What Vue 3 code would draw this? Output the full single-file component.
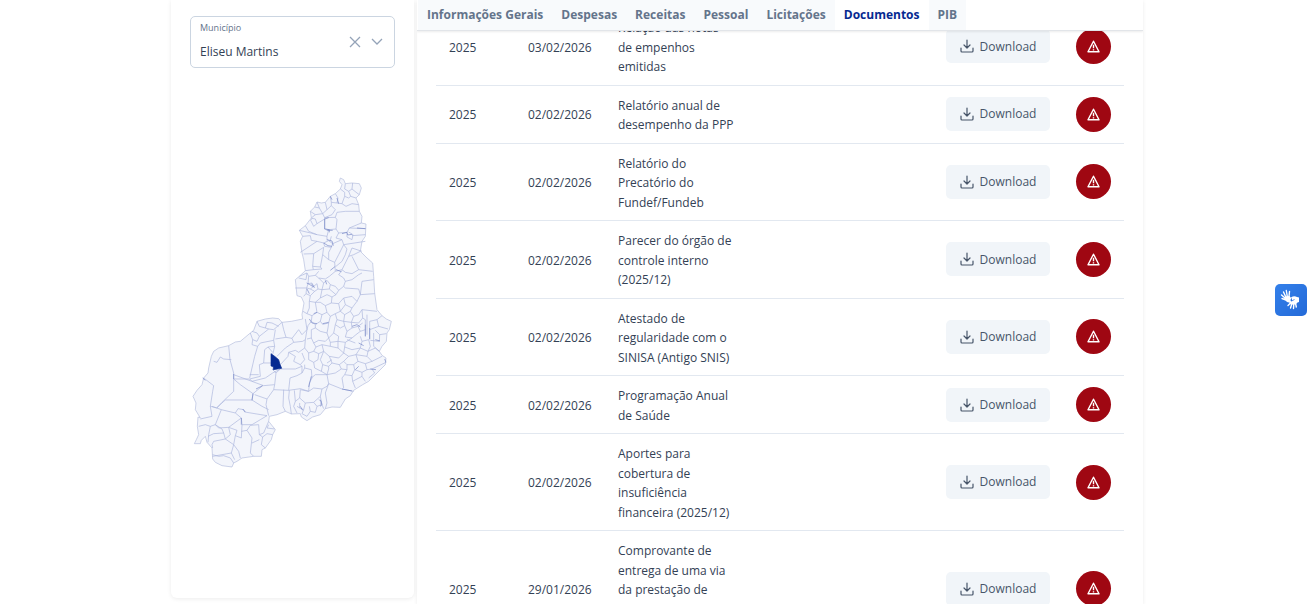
<script setup>
import { ref } from 'vue'

const municipio = ref('Eliseu Martins')
const municipios = ['Eliseu Martins', 'Teresina', 'Parnaíba', 'Picos']

const tabs = ['Informações Gerais', 'Despesas', 'Receitas', 'Pessoal', 'Licitações', 'Documentos', 'PIB']
const activeTab = ref('Documentos')

const documentos = [
  { ano: 2025, data: '03/02/2026', nome: 'Relação das notas de\u00a0empenhos emitidas' },
  { ano: 2025, data: '02/02/2026', nome: 'Relatório anual de desempenho da PPP' },
  { ano: 2025, data: '02/02/2026', nome: 'Relatório do Precatório do Fundef/Fundeb' },
  { ano: 2025, data: '02/02/2026', nome: 'Parecer do órgão de controle interno (2025/12)' },
  { ano: 2025, data: '02/02/2026', nome: 'Atestado de regularidade com o SINISA (Antigo SNIS)' },
  { ano: 2025, data: '02/02/2026', nome: 'Programação Anual de Saúde' },
  { ano: 2025, data: '02/02/2026', nome: 'Aportes para cobertura de insuficiência financeira (2025/12)' },
  { ano: 2025, data: '29/01/2026', nome: 'Comprovante de entrega de uma via da prestação de contas ao governo municipal' }
]

// contorno do estado
const contorno = 'M350 15L356 -20 348 -38 335 -42 330 -90 342 -100 360 -117 355 -150 350 -170 345 -205 352 -220 342 -238 360 -252 378 -275 375 -295 388 -308 395 -323 408 -320 420 -322 435 -340 450 -348 465 -362 470 -375 462 -385 465 -395 475 -390 480 -378 500 -380 522 -378 528 -365 522 -345 512 -335 520 -315 522 -295 530 -280 528 -260 542 -257 540 -220 530 -205 525 -175 545 -155 562 -140 565 -100 568 -50 575 0 590 18 603 28 618 35 612 60 605 70 603 95 590 110 582 125 590 137 602 145 600 165 575 190 550 215 532 225 505 242 495 258 480 268 465 293 440 292 420 297 405 315 382 322 365 333 348 322 345 312 318 313 300 305 275 315 252 320 250 335 270 360 262 375 258 390 240 415 230 420 228 440 205 440 170 445 155 455 145 460 140 472 125 470 110 468 90 458 82 448 80 415 65 398 60 380 48 392 45 402 27 402 33 390 40 375 36 350 38 322 45 325 30 300 32 280 23 260 35 242 50 225 55 205 68 190 70 175 78 140 85 125 100 115 130 108 150 97 165 95 195 70 205 62 215 35 240 28 262 25 280 27 290 38 318 35 352 28Z'

// divisas municipais, de norte a sul
const divisasNorte = [
  'M480 -378L478 -362 490 -355 500 -362 502 -380M500 -362L515 -350 522 -345M490 -355L496 -340 512 -335M465 -362L478 -352 478 -340 490 -335 496 -340M450 -348L458 -335 455 -320 470 -318 478 -340M435 -340L438 -322 455 -320M470 -318L482 -310 500 -318 520 -315M420 -322L425 -300 438 -312 438 -322M395 -323L402 -305 412 -288 425 -300M388 -308L402 -305M378 -275L390 -285 412 -288 418 -276 440 -285 450 -300 438 -312',
  'M375 -295L390 -285M376 -268L385 -250 395 -258 390 -272 380 -274 376 -268M395 -258L418 -272M360 -252L370 -235 395 -225 425 -220 430 -240 418 -242 418 -276 450 -277 455 -292 480 -295 522 -295M450 -277L455 -270 452 -242 430 -240M452 -242L460 -230 485 -232 492 -245 528 -260M342 -238L376 -230 395 -225M352 -220L375 -222M375 -222L378 -208 395 -205 415 -200M460 -230L452 -215 470 -210 475 -195 540 -205M485 -232L485 -218 500 -210 503 -225 490 -233M492 -245L542 -243M500 -222L540 -225',
  'M415 -200L418 -190 438 -187 442 -198 430 -207 415 -200M425 -220L425 -208M438 -220L434 -205M442 -198L470 -210M345 -172L365 -185 395 -205M355 -167L385 -168 415 -187M385 -168L382 -130 405 -128 412 -165 415 -187M412 -165L430 -150 430 -172 438 -187M430 -150L448 -142 460 -165 475 -195M448 -142L450 -115 470 -120 490 -160 500 -185 530 -175M475 -195L485 -182 480 -165 470 -145 452 -130M490 -160L505 -165 525 -175M500 -160L510 -140 520 -120 500 -108 480 -112 470 -120M520 -120L562 -115M382 -130L384 -120 410 -122 405 -128M360 -117L384 -120',
  'M342 -100L365 -110 370 -100 390 -103 400 -115M365 -110L362 -90 340 -95M390 -103L400 -95 420 -92 432 -100 450 -115M470 -118L460 -105 475 -95 480 -85 500 -90 520 -105 530 -110M480 -85L475 -70 480 -65 520 -62 525 -45 568 -48M530 -85L525 -45M530 -85L565 -90M370 -100L368 -78 380 -80 385 -70 375 -62 364 -65 368 -78M385 -70L395 -78 398 -62 388 -55 375 -62M398 -62L410 -60 415 -80 400 -95M415 -80L425 -88 435 -75 432 -62 410 -60M435 -75L450 -70 460 -58 475 -70M460 -58L452 -45 432 -62M330 -65L364 -65M364 -65L362 -48 375 -42 388 -55M362 -48L355 -40M375 -42L372 -25 390 -22 405 -35 410 -60M405 -35L425 -45 440 -38 452 -45M440 -38L438 -20 420 -12 405 -22 390 -22M438 -20L460 -18 475 -35 500 -40 515 -25 525 -45M475 -35L480 -15 500 -5 515 -25M460 -18L465 5 480 -15'
]
const divisasCentro = [
  'M353 5L365 12 372 -5 372 -25M365 12L380 18 395 8 390 -22M380 18L378 35 390 45 405 35 410 15 395 8M410 15L425 8 420 -12M425 8L435 20 430 40 412 44 405 35M435 20L450 12 465 5 478 15 495 5 500 -5M450 12L455 30 475 35 478 15M455 30L450 45 465 55 478 48 475 35M495 5L505 20 498 38 475 35M505 20L520 15 530 0 575 5M530 0L532 25 520 40 498 38M532 25L540 30 540 80M545 15L545 75M553 35L553 90M532 40L518 50 500 55 498 38M518 50L525 65 540 60M500 55L485 65 478 48M485 65L480 82 500 85 512 75 525 65M553 35L575 30 590 18M575 30L580 50 608 58M553 60L580 50M570 62L583 75 582 95 555 92M583 75L603 72M565 70L565 110 582 125M525 80L530 95 550 90',
  'M200 65L215 70 222 80 235 70 250 58 265 60 290 38M215 35L222 50 240 55 250 58M240 55L245 38 260 40 280 50M195 70L202 90 215 95 222 80M202 90L200 105 217 110M217 110L208 140 193 205M217 110L225 100 265 92 270 60M265 92L268 110 248 112 238 120 235 160M268 110L262 135M248 112L262 128M290 38L295 60 302 83 270 88M302 83L320 86 340 60 350 75 365 60 360 28M320 86L325 98 300 115 285 130 275 140M325 98L352 95 360 90 365 60M360 90L358 115 340 128 330 122 310 128 308 140 285 165M310 128L330 140 325 155 345 165 358 150 350 130M378 35L368 48 365 60M378 60L390 55 405 65 425 70 430 85 420 95 400 92 385 100 378 85 378 60M378 85L365 88M390 45L390 55M430 40L428 55 425 70M450 45L445 70 430 85M445 70L460 80 458 95 435 98 430 85',
  'M385 100L392 112 385 125 370 130 358 115M392 112L410 105 435 110 435 98M410 105L415 125 400 132 385 125M415 125L432 140 460 145 475 130 458 115 435 110M458 115L458 95 480 98 500 85M480 98L478 112 500 120 525 115 530 95M478 112L475 130 490 140 512 135 525 115M550 90L555 110 548 125 525 115M548 125L570 115 582 125M548 125L545 140 512 135M545 140L560 155 590 140M560 155L540 162 518 155 512 135M540 162L545 180 560 178 602 158M560 178L568 190 550 205M545 180L530 188 508 180 505 165 518 155M505 165L485 165 475 155 490 140M475 155L462 165 440 160 432 140M440 160L430 170 412 165 405 150 415 125M412 165L408 185 425 195 430 178 430 170M400 132L398 150 385 158 370 150 370 130M385 158L388 175 408 185M462 165L468 178 450 190 425 195M468 178L485 180 485 165M485 180L478 195 500 198 508 180M500 198L502 215 510 235M502 215L530 200 530 188M530 200L540 215M478 195L470 205 475 235M485 90L510 100M440 150L425 160',
  'M85 155L95 158 105 142 115 148 138 150M130 108L134 150 145 190 145 208 193 208 225 200 222 165 235 160 257 160M193 195L220 195M145 195L235 228 268 225 272 190 260 178M193 208L200 215 240 205 262 190 285 178M55 205L85 228 82 245 75 290 95 295 110 278 145 245 145 208M95 293L120 271 200 271M145 208L165 225 203 252 200 271 230 290 250 300M203 252L232 228M208 255L245 268M268 225L265 240 245 268 242 285 250 318M272 190L285 178 330 178 350 170 345 165M265 240L310 242 345 237 370 245M295 240L293 290 300 305M312 242L310 265 315 290 318 313M310 242L314 205 335 198 350 190 350 170M350 190L358 175 358 165M358 175L378 180 380 205 372 220 370 245 385 235 410 238 425 230 430 222 470 238 505 245M378 205L390 195 425 195M425 195L430 222M430 222L420 250 425 280 420 297M370 245L345 240 343 265 360 280 385 278 405 260 410 238'
]
const divisasSul = [
  'M327 242L330 275 325 290 335 310M330 275L343 265M343 280L343 295 355 300 360 280M355 300L350 312 365 320 375 305 390 308 395 290 385 278M375 305L372 290M395 290L410 285 405 260M410 285L415 297M335 290L343 295M400 270L408 275 405 285M75 290L80 320 45 328M80 290L108 300 150 310 158 297 175 300 178 307 245 318 225 330 200 345 170 345M108 300L90 345 100 355 130 353 168 325 150 310M168 325L170 345 168 385 150 378 155 362 130 353M130 353L135 375 120 388 115 370 85 372 68 380M90 345L75 350 60 345 40 350M75 350L70 375 68 398M90 345L110 358 115 370M120 388L85 395 80 405 82 415M120 388L145 405 138 430 110 435 82 440M138 430L148 450M168 365L185 362 200 385 195 430 205 440M185 362L195 347 220 345 222 375 235 370 250 335M222 375L232 382 228 405 240 415M232 382L245 372 262 375M150 378L145 405 160 425 165 445M200 400L222 390M250 345L245 355 268 358M82 435L100 440 115 438 135 445 145 460'
]
const divisas = [...divisasNorte, ...divisasCentro, ...divisasSul]

// trechos onde as divisas se sobrepõem
const reforcos = 'M418 -242L418 -272 430 -276M418 -242L432 -240 432 -232M424 -238L442 -238M425 -210L440 -206 444 -192M415 -200L428 -192 440 -190M470 -228L485 -232 487 -224 500 -226M515 -245L540 -243M364 -80L372 -76 385 -68M365 -62L372 -48M378 -78L388 -66M420 -88L424 -76M435 -118L450 -130M452 -120L468 -114M435 -340L440 -330M455 -335L460 -318M372 28L380 40 395 42M412 42L430 38M385 12L395 8M500 50L515 45 525 52M540 45L540 80M553 55L553 88M570 90L584 94M520 100L535 108M145 193V208M203 252L200 272M212 238L232 228M52 205L60 212M168 325V345M172 298L180 307M405 270L410 285 404 290M345 290L352 302M378 200L370 232M470 238L500 244M510 180L520 170M555 178L572 180M598 148L602 158'

function limpar() {
  municipio.value = ''
}
</script>

<template>
  <div class="page">
    <main class="container">
      <aside class="sidebar">
        <div class="field">
          <div class="field-body">
            <label for="municipio">Município</label>
            <select id="municipio" v-model="municipio">
              <option v-for="m in municipios" :key="m" :value="m">{{ m }}</option>
            </select>
          </div>
          <button type="button" class="clear" aria-label="Limpar" @click="limpar">
            <svg width="12" height="12" viewBox="0 0 12 12"><path d="M1 1l10 10M11 1L1 11" /></svg>
          </button>
          <svg class="chevron" width="12" height="12" viewBox="0 0 12 12"><path d="M1 3l5 5 5-5" /></svg>
        </div>

        <div class="map">
          <svg viewBox="20 -398 603 874" role="img" aria-label="Mapa do Piauí">
            <path class="estado" :d="contorno" />
            <path v-for="(d, i) in divisas" :key="i" class="divisa" :d="d" />
            <path class="reforco" :d="reforcos" />
            <path class="selecionado" d="M257 132L268 140 280 150 284 164 289 176 264 180 264 171 257 169Z" />
          </svg>
        </div>
      </aside>

      <section class="content">
        <nav class="tabs">
          <button
            v-for="tab in tabs"
            :key="tab"
            type="button"
            :class="{ active: tab === activeTab }"
            @click="activeTab = tab"
          >{{ tab }}</button>
        </nav>

        <div class="table-wrap">
          <table>
            <colgroup>
              <col class="c-ano">
              <col class="c-data">
              <col class="c-nome">
              <col>
              <col class="c-download">
              <col class="c-alerta">
            </colgroup>
            <tbody>
              <tr v-for="(doc, i) in documentos" :key="i">
                <td>{{ doc.ano }}</td>
                <td>{{ doc.data }}</td>
                <td>{{ doc.nome }}</td>
                <td></td>
                <td class="acao">
                  <button type="button" class="download">
                    <svg width="14" height="14" viewBox="0 0 14 14">
                      <path d="M7 1v8M4 6l3 3 3-3M1 9v3q0 1 1 1h10q1 0 1-1V9" />
                    </svg>
                    Download
                  </button>
                </td>
                <td class="acao">
                  <button type="button" class="alerta" aria-label="Reportar problema">
                    <svg width="13" height="13" viewBox="0 0 13 13">
                      <path d="M6.5 1.2L12 11.8H1Z" />
                      <path d="M6.5 4.8v3.4M6.5 9.3v1.2" />
                    </svg>
                  </button>
                </td>
              </tr>
            </tbody>
          </table>
        </div>
      </section>
    </main>

    <button type="button" class="libras" aria-label="Acessível em Libras">
      <svg width="22" height="22" viewBox="0 0 22 22">
        <path class="mao" d="M5 7.500L9.500 7 11.500 9.500 10.500 11.500 11.500 13 9 13.500Q6 13 5 10.500Z" />
        <path class="dedo" d="M6 8.500L3.500 3M7.300 7.500L6.300 1.500M9 7.500L9.500 2.500M5.500 9.500L1.500 6M6 11L2 9.500" />
        <path class="mao" d="M11 8.500Q14 6.500 17 8L19 8.500V13L17.500 13.500 15.500 15.500 10.500 15.500 9 13.500 12.500 12Z" />
        <path class="dedo" d="M10.500 14L8 16.500M12 14.500L10.500 19M13.800 14.500L13.500 19.500M15.500 14L16.300 18" />
        <path class="corte" d="M11.500 9.500Q10 11.500 12.500 11.500L14.500 10.500" />
      </svg>
    </button>
  </div>
</template>

<style>
html,
body {
  margin: 0;
  background: #fff;
}
</style>

<style scoped>
.page {
  height: 100vh;
  overflow: hidden;
  box-sizing: border-box;
  padding-left: 7px;
  background: #fff;
  color: #334155;
  font-family: "Open Sans", sans-serif;
  font-size: 12px;
}
button,
select {
  font: inherit;
  border: 0;
  cursor: pointer;
}
.container {
  display: flex;
  gap: 3px;
  max-width: 972px;
  height: 100%;
  margin: 0 auto;
}
.sidebar {
  display: flex;
  flex-direction: column;
  flex: 0 0 25%;
  box-sizing: border-box;
  height: calc(100% - 6px);
  padding: 16px 19px 0;
  border-radius: 0 0 6px 6px;
  box-shadow: 0 1px 4px rgba(0, 0, 0, 0.08);
}
.field {
  display: flex;
  align-items: center;
  box-sizing: border-box;
  height: 52px;
  padding-right: 11px;
  border: 1px solid #cbd5e1;
  border-radius: 5px;
}
.field-body {
  flex: 1;
  min-width: 0;
  padding-top: 2px;
}
.field label {
  display: block;
  padding: 0 9px;
  color: #64748b;
  font-size: 9px;
  line-height: 16px;
}
.field select {
  display: block;
  width: 100%;
  height: 30px;
  padding: 0 9px;
  appearance: none;
  background: transparent;
  color: #334155;
}
.clear {
  display: flex;
  margin-right: 10px;
  padding: 0;
  background: none;
}
.field svg path {
  fill: none;
  stroke: #94a3b8;
  stroke-width: 1.3;
}
.map {
  margin-top: 109px;
  padding: 0 2px;
}
.map svg {
  display: block;
  width: 100%;
}
.estado {
  fill: #f3f5fb;
  stroke: #b4bddd;
  stroke-width: 2;
}
.divisa {
  fill: none;
  stroke: #aab5dc;
  stroke-width: 2;
}
.reforco {
  fill: none;
  stroke: #7485c6;
  stroke-width: 2;
}
.selecionado {
  fill: #062a91;
  stroke: #062a91;
  stroke-width: 2;
}
.content {
  flex: 1;
  min-width: 0;
  height: 100%;
  overflow: hidden;
  box-shadow: 0 1px 4px rgba(0, 0, 0, 0.08);
}
.tabs {
  position: sticky;
  top: 0;
  z-index: 1;
  display: flex;
  height: 30px;
  padding-left: 1px;
  background: #fff;
  border-bottom: 1px solid #e2e5e9;
  box-shadow: 0 1px 2px rgba(0, 0, 0, 0.08);
}
.tabs button {
  padding: 0 9px 2px;
  background: #f8fafc;
  color: #64748b;
  font-weight: 700;
  white-space: nowrap;
}
.tabs button.active {
  background: #fff;
  color: #062a91;
}
.table-wrap {
  margin-top: -23px;
  padding: 0 19px;
}
table {
  width: 100%;
  table-layout: fixed;
  border-collapse: separate;
  border-spacing: 0;
}
.c-ano { width: 79px; }
.c-data { width: 90px; }
.c-nome { width: 144px; }
.c-download { width: 130px; }
.c-alerta { width: 61px; }
td {
  padding: 10px 13px 8px;
  border-bottom: 1px solid #e2e8f0;
  line-height: 1.625;
  vertical-align: middle;
}
td.acao {
  padding: 9px 13px;
}
.download {
  display: flex;
  align-items: center;
  justify-content: center;
  gap: 6px;
  width: 104px;
  height: 34px;
  padding: 0;
  border-radius: 5px;
  background: #f1f5f9;
  color: #475569;
}
.download svg path {
  fill: none;
  stroke: #475569;
  stroke-width: 1.2;
  stroke-linecap: round;
  stroke-linejoin: round;
}
.alerta {
  display: flex;
  align-items: center;
  justify-content: center;
  width: 35px;
  height: 35px;
  padding: 0;
  border-radius: 50%;
  background: #9f0712;
}
.alerta svg path {
  fill: none;
  stroke: #fff;
  stroke-width: 1.4;
  stroke-linejoin: round;
}
.libras {
  position: fixed;
  top: 284px;
  right: 0;
  display: flex;
  align-items: center;
  justify-content: center;
  width: 32px;
  height: 32px;
  padding: 0;
  border-radius: 5px;
  background: linear-gradient(135deg, #3380ea, #246ad8);
}
.mao {
  fill: #fff;
}
.dedo {
  fill: none;
  stroke: #fff;
  stroke-width: 1.4;
  stroke-linecap: round;
}
.corte {
  fill: none;
  stroke: #2a70dc;
  stroke-width: 0.8;
}
</style>
